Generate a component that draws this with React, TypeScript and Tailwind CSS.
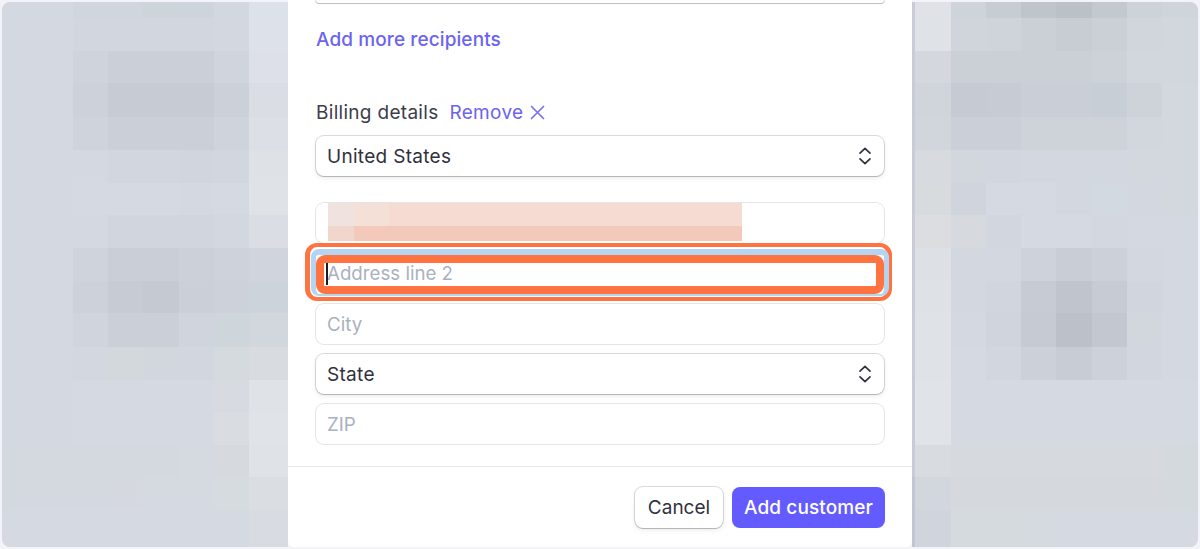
import React from "react";

const rowEdges = [0, 18, 51, 83, 117, 150, 183, 215, 248, 281, 313, 347, 380, 412, 445, 477, 510, 549];
const leftEdges = [0, 73, 108, 143, 179, 214, 249, 288];
const rightEdges = [912, 915, 951, 986, 1021, 1056, 1092, 1127, 1162, 1200];

const left: string[][] = [
  ["d4d9e1", "d1d6de", "d1d6de", "cdd4da", "cdd4dc", "d3d8e0", "dde1ea"],
  ["d4d9e1", "d2d7df", "d1d6df", "d1d6df", "d1d6df", "d3d8e0", "dde1ea"],
  ["d4d9e1", "cfd4dc", "cbd0d8", "cbd0d8", "cbd0d8", "d0d5dd", "dde0e8"],
  ["d4d9e1", "cdd2da", "c7ccd4", "c6cbd4", "c6cbd4", "ccd1d9", "dadde3"],
  ["d4d9e1", "cfd4dc", "cbd0d8", "cbd0d8", "cbd0d8", "cfd4dc", "dcdfe5"],
  ["d4d9e1", "d4d9e1", "d2d7df", "d2d7df", "d1d6de", "d2d7df", "dee1e6"],
  ["d4d9e1", "d5dae2", "d5dae2", "d5dae2", "d4d9e1", "d5dae2", "dfe2e7"],
  ["d4d9e1", "d4d9e1", "d1d6de", "d1d6de", "d1d6de", "d3d8e0", "dadde3"],
  ["d4d9e1", "cfd4dc", "cacfd7", "cacfd7", "ccd1d9", "ced3db", "d0d5dd"],
  ["d4d9e1", "cdd2da", "c7ccd4", "c4c9d2", "cbd0d8", "cdd2da", "ccd3da"],
  ["d4d9e1", "d0d5dd", "cbd0d8", "cbd0d8", "d0d5dd", "ced5db", "d2d7dd"],
  ["d4d9e1", "d3d8e0", "d3d8dd", "d2d7de", "d2d7df", "d5dade", "d8dce0"],
  ["d4d9e1", "d5dae2", "d5dae2", "d5dae2", "d5dae2", "d7dbe1", "dfe2e7"],
  ["d4d9e1", "d5dae2", "d5dae2", "d5dae2", "d5dae2", "d9dde2", "e0e3e8"],
  ["d4d9e0", "d4d9e0", "d4d9e0", "d4d9e0", "d5dae0", "d6dade", "dfe2e6"],
  ["d4d9e0", "d4d9e0", "d5d9df", "d5dae0", "d5dae0", "d6dbe0", "dadee3"],
  ["d5dae2", "d5dae2", "d5dae2", "d5dae2", "d5dae2", "d5dae2", "d8dce2"],
];

const right: string[][] = [
  ["c9ccd6", "dfe2e7", "cfd4db", "c8cdd4", "c0c5cc", "bcc1c8", "c4c9d0", "ced3da", "d0d5db"],
  ["c9ccd6", "dfe2e7", "d0d5dc", "cfd4db", "cbd0d7", "c8cdd4", "cbd0d7", "d1d6dd", "d2d7dd"],
  ["c9ccd6", "d4d8de", "cbd0d7", "cbd0d7", "cbd0d7", "cbd0d7", "cdd2d9", "d2d7dd", "d2d7dd"],
  ["c9ccd6", "d0d5db", "c6cbd3", "c7ccd4", "cacfd7", "cacfd7", "c8ced6", "ced3da", "d3d8de"],
  ["c9ccd6", "d1d6dc", "cbd0d8", "cbd0d8", "ced3da", "ced3da", "ced3da", "d2d7dd", "d3d8de"],
  ["c9ccd6", "d7dadf", "d2d7dd", "d2d7df", "d3d8e0", "d3d8e0", "d3d8e0", "d3d8de", "d3d8de"],
  ["c9ccd6", "d7dbdd", "d0d5dd", "d5dae2", "d5dae2", "d3d8e0", "d2d9e0", "d3d8e0", "d3d8de"],
  ["c9ccd6", "dbdde0", "d6dade", "d2d7df", "d5dae2", "d5dae2", "d3d8e0", "d4d9e1", "d4d9e1"],
  ["c9ccd6", "dde0e5", "d3d8e0", "d3d8e0", "ced3db", "c9ced6", "ccd1d9", "d3d8e0", "d4d9e1"],
  ["c9ccd6", "dee1e6", "d3d8e0", "d1d6de", "c6cbd4", "bfc4cd", "c6cbd4", "d1d6de", "d4d9e1"],
  ["c9ccd6", "dfe2e7", "d4d9e1", "d0d5dd", "c5cad3", "bbc0c9", "c2c7d0", "d2d7dd", "d4d9e1"],
  ["c9ccd6", "dfe2e7", "d5dae2", "d2d7df", "ccd1d9", "c8cdd5", "cdd2da", "d2d7df", "d4d9e1"],
  ["c9ccd6", "e0e3e8", "d5dae2", "d5dae2", "d5dae2", "d5dae2", "d5dae2", "d5dae2", "d5dae2"],
  ["c9ccd6", "e0e3e8", "d5dae2", "d5dae2", "d5dae2", "d5dae2", "d5dae2", "d5dae2", "d5dae2"],
  ["c9ccd6", "d8dce1", "d6dade", "d6dade", "d6dade", "d6dade", "d6dade", "d6dade", "d4d9dd"],
  ["c2c6d2", "d2d7de", "d5d9de", "d5d9de", "d5d9de", "d5d9de", "d5d9de", "d5d9de", "d4d9dd"],
  ["c2c6d2", "d0d4dd", "d5dade", "d5dade", "d5dae0", "d5dae2", "d5dae2", "d5dae2", "d5dae2"],
];

function Mosaic({ edges, data }: { edges: number[]; data: string[][] }) {
  return (
    <>
      {data.map((row, r) =>
        row.map((c, i) => (
          <rect
            key={`${edges[0]}-${r}-${i}`}
            x={edges[i]}
            y={rowEdges[r]}
            width={edges[i + 1] - edges[i]}
            height={rowEdges[r + 1] - rowEdges[r]}
            fill={`#${c}`}
          />
        ))
      )}
    </>
  );
}

function Chevrons() {
  return (
    <svg width="14" height="20" viewBox="0 0 14 20" fill="none" stroke="#30313d" strokeWidth="1.7" strokeLinecap="round" strokeLinejoin="round">
      <path d="M2 7.2 7 2.4l5 4.8" />
      <path d="M2 12.8l5 4.8 5-4.8" />
    </svg>
  );
}

function Select({ label }: { label: string }) {
  return (
    <div className="flex h-[40px] items-center justify-between rounded-[8px] bg-white pl-[11px] pr-[12px] shadow-[0_1px_1px_rgba(0,0,0,0.14),0_0_0_1px_rgba(64,68,82,0.18),0_2px_5px_rgba(64,68,82,0.1)]">
      <span className="pt-[2px] text-[19px] leading-[24px] tracking-[0.3px] text-[#30313d]">{label}</span>
      <Chevrons />
    </div>
  );
}

function Input({ placeholder }: { placeholder: string }) {
  return (
    <div className="flex h-[40px] items-center rounded-[8px] bg-white pl-[11px] shadow-[0_0_0_1px_rgba(64,68,82,0.14)]">
      <span className="pt-[2px] text-[18.7px] leading-[24px] text-[#a9b1bf]">{placeholder}</span>
    </div>
  );
}

export default function App() {
  return (
    <div className="relative h-[549px] w-[1200px] overflow-hidden bg-[#f3f3f9] font-['Inter',sans-serif]">
      <div className="absolute inset-[2px] overflow-hidden rounded-[8px]">
        <svg className="absolute left-[-2px] top-[-2px] blur-[0.6px]" width="1200" height="549" viewBox="0 0 1200 549" shapeRendering="crispEdges">
          <Mosaic edges={leftEdges} data={left} />
          <Mosaic edges={rightEdges} data={right} />
        </svg>
      </div>

      <div className="relative mx-auto flex h-[547px] w-[624px] flex-col rounded-b-[6px] bg-white px-[28px]">
        <div className="h-[3px] rounded-b-[8px] bg-white shadow-[0_1px_1px_rgba(0,0,0,0.14),0_0_0_1px_rgba(64,68,82,0.18)]" />

        <div className="mt-[25px] text-[19px] font-medium leading-[24px] tracking-[0.1px] text-[#6c63ef]">Add more recipients</div>

        <div className="mt-[49px] flex items-center text-[19px] leading-[24px] tracking-[0.3px]">
          <span className="text-[#3c3d49]">Billing details</span>
          <span className="ml-[11px] text-[#6c63ef]">Remove</span>
          <svg className="mb-[2px] ml-[7px]" width="15" height="15" viewBox="0 0 15 15" fill="none" stroke="#7a72f0" strokeWidth="1.7" strokeLinecap="round">
            <path d="M1.5 1.5l12 12M13.5 1.5l-12 12" />
          </svg>
        </div>

        <div className="mt-[11px]">
          <Select label="United States" />
        </div>

        <div className="relative mt-[27px] h-[40px] rounded-[8px] bg-white shadow-[0_0_0_1px_rgba(64,68,82,0.14)]">
          <div className="ml-[12px] flex h-[38px] w-[414px] flex-col">
            <div className="flex h-[23px]">
              <div className="w-[26px] bg-[#f0e3df]" />
              <div className="w-[35px] bg-[#f5e0d7]" />
              <div className="flex-1 bg-[#f5dbd2]" />
            </div>
            <div className="flex flex-1">
              <div className="w-[26px] bg-[#f1d6cc]" />
              <div className="flex-1 bg-[#f2c9bb]" />
            </div>
          </div>
        </div>

        <div className="relative mt-[10px] flex h-[40px] items-center">
          <div className="relative ml-[11px] pt-[2px] text-[18.7px] leading-[24px] text-[#a9b1bf]">
            Address line 2
            <span className="absolute bottom-[1px] left-[-1px] top-[1px] w-[1.5px] bg-[#1a1b25]" />
          </div>
          <div className="pointer-events-none absolute bottom-[-8px] left-[-11px] right-[-8px] top-[-10px] rounded-[12px] border-x-[5px] border-y-[4px] border-[#ff7340]" />
          <div className="pointer-events-none absolute bottom-[-3px] left-[-5px] right-[-5px] top-[-4px] rounded-[8px] border-x-[5px] border-b-[2px] border-t-[6px] border-[#b4d5f2]" />
          <div className="pointer-events-none absolute bottom-[-1px] left-0 right-0 top-[2px] rounded-[9px] border-[8px] border-[#ff7340]" />
        </div>

        <div className="mt-[11px]">
          <Input placeholder="City" />
        </div>
        <div className="mt-[10px]">
          <Select label="State" />
        </div>
        <div className="mt-[10px]">
          <Input placeholder="ZIP" />
        </div>

        <div className="mx-[-28px] mt-[22px] border-t border-[#e8e9ee]" />

        <div className="mr-[-1px] mt-[20px] flex justify-end gap-[9px]">
          <div className="flex h-[41px] w-[88px] items-center justify-center rounded-[8px] bg-white pt-[2px] text-[19px] text-[#30313d] shadow-[0_1px_1px_rgba(0,0,0,0.14),0_0_0_1px_rgba(64,68,82,0.18),0_2px_5px_rgba(64,68,82,0.1)]">
            Cancel
          </div>
          <div className="flex h-[41px] w-[153px] items-center justify-center rounded-[8px] bg-[#635bff] pt-[2px] text-[19px] font-medium tracking-[0.1px] text-white">
            Add customer
          </div>
        </div>
      </div>
    </div>
  );
}
